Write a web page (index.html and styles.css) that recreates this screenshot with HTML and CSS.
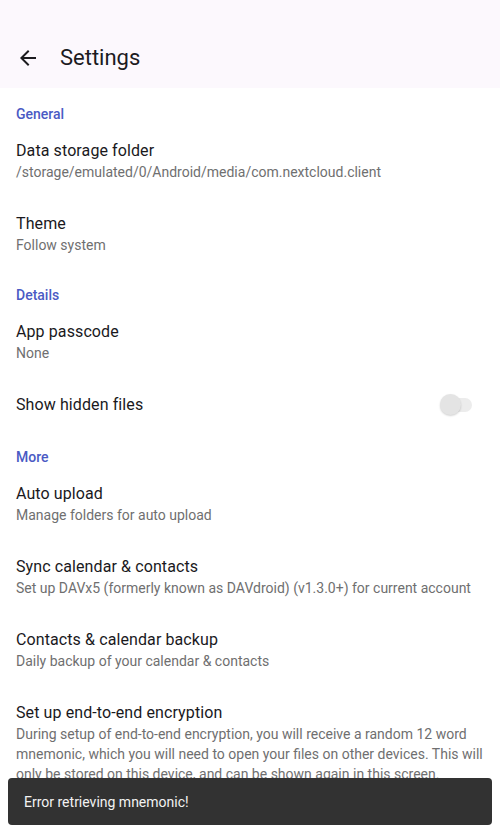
FILE: index.html
```html
<!DOCTYPE html>
<html>
<head>
<meta charset="utf-8">
<link rel="stylesheet" href="styles.css">
</head>
<body>
<div class="screen">
  <header class="appbar">
    <svg class="back" viewBox="0 0 24 24" width="24" height="24"><path d="M20 11H7.83l5.59-5.59L12 4l-8 8 8 8 1.41-1.41L7.83 13H20v-2z" fill="#1c1b1f"/></svg>
    <h1 class="title">Settings</h1>
  </header>
  <main class="list">
    <div class="cat">General</div>
    <div class="item"><div class="t">Data storage folder</div><div class="s">/storage/emulated/0/Android/media/com.nextcloud.client</div></div>
    <div class="item"><div class="t">Theme</div><div class="s">Follow system</div></div>
    <div class="cat">Details</div>
    <div class="item"><div class="t">App passcode</div><div class="s">None</div></div>
    <div class="item row"><div class="t">Show hidden files</div><div class="switch"><span class="track"></span><span class="thumb"></span></div></div>
    <div class="cat">More</div>
    <div class="item"><div class="t">Auto upload</div><div class="s">Manage folders for auto upload</div></div>
    <div class="item"><div class="t">Sync calendar &amp; contacts</div><div class="s">Set up DAVx5 (formerly known as DAVdroid) (v1.3.0+) for current account</div></div>
    <div class="item"><div class="t">Contacts &amp; calendar backup</div><div class="s">Daily backup of your calendar &amp; contacts</div></div>
    <div class="item"><div class="t">Set up end-to-end encryption</div><div class="s">During setup of end-to-end encryption, you will receive a random 12 word mnemonic, which you will need to open your files on other devices. This will only be stored on this device, and can be shown again in this screen. Please note it down in a secure place!</div></div>
  </main>
  <div class="snackbar">Error retrieving mnemonic!</div>
</div>
</body>
</html>
```
FILE: styles.css
```css
* { box-sizing: border-box; }
html, body { margin: 0; padding: 0; }
body {
  width: 500px;
  height: 833px;
  overflow: hidden;
  background: #ffffff;
  font-family: Roboto, "Noto Sans", sans-serif;
}
.screen {
  position: relative;
  width: 500px;
  height: 833px;
  overflow: hidden;
}
.appbar {
  height: 88px;
  background: #fcf8fd;
  display: flex;
  align-items: flex-end;
  padding: 0 0 18px 16px;
}
.back { display: block; margin-right: 20px; }
.title {
  margin: 0;
  font-size: 22px;
  font-weight: 400;
  color: #1c1b1f;
  line-height: 24px;
}
.list { display: flex; flex-direction: column; padding-top: 1px; }
.cat {
  padding: 16px 16px 0;
  font-size: 14px;
  line-height: 19px;
  font-weight: 500;
  color: #4a5ac4;
}
.item {
  padding: 16px 16px 15px;
  min-height: 73px;
}
.item.row {
  min-height: 54px;
  padding: 16px 16px;
  display: flex;
  align-items: center;
  justify-content: space-between;
}
.t {
  font-size: 16px;
  line-height: 22px;
  font-weight: 400;
  letter-spacing: 0.1px;
  color: #1a191d;
}
.s {
  font-size: 14px;
  line-height: 20px;
  color: #6f6f70;
}
.switch {
  position: relative;
  width: 32px;
  height: 22px;
  margin-right: 12px;
}
.track {
  position: absolute;
  left: 5px;
  top: 4px;
  width: 27px;
  height: 14px;
  border-radius: 7px;
  background: #ececec;
}
.thumb {
  position: absolute;
  left: 0;
  top: 0;
  width: 21px;
  height: 21px;
  border-radius: 50%;
  background: #e4e4e4;
  box-shadow: 0 1px 2px rgba(0,0,0,0.18);
}
.snackbar {
  position: absolute;
  left: 8px;
  right: 8px;
  bottom: 8px;
  height: 47px;
  background: #323232;
  border-radius: 4px;
  color: #f2f2f2;
  font-size: 14px;
  line-height: 20px;
  display: flex;
  align-items: center;
  padding: 0 16px;
}
```
